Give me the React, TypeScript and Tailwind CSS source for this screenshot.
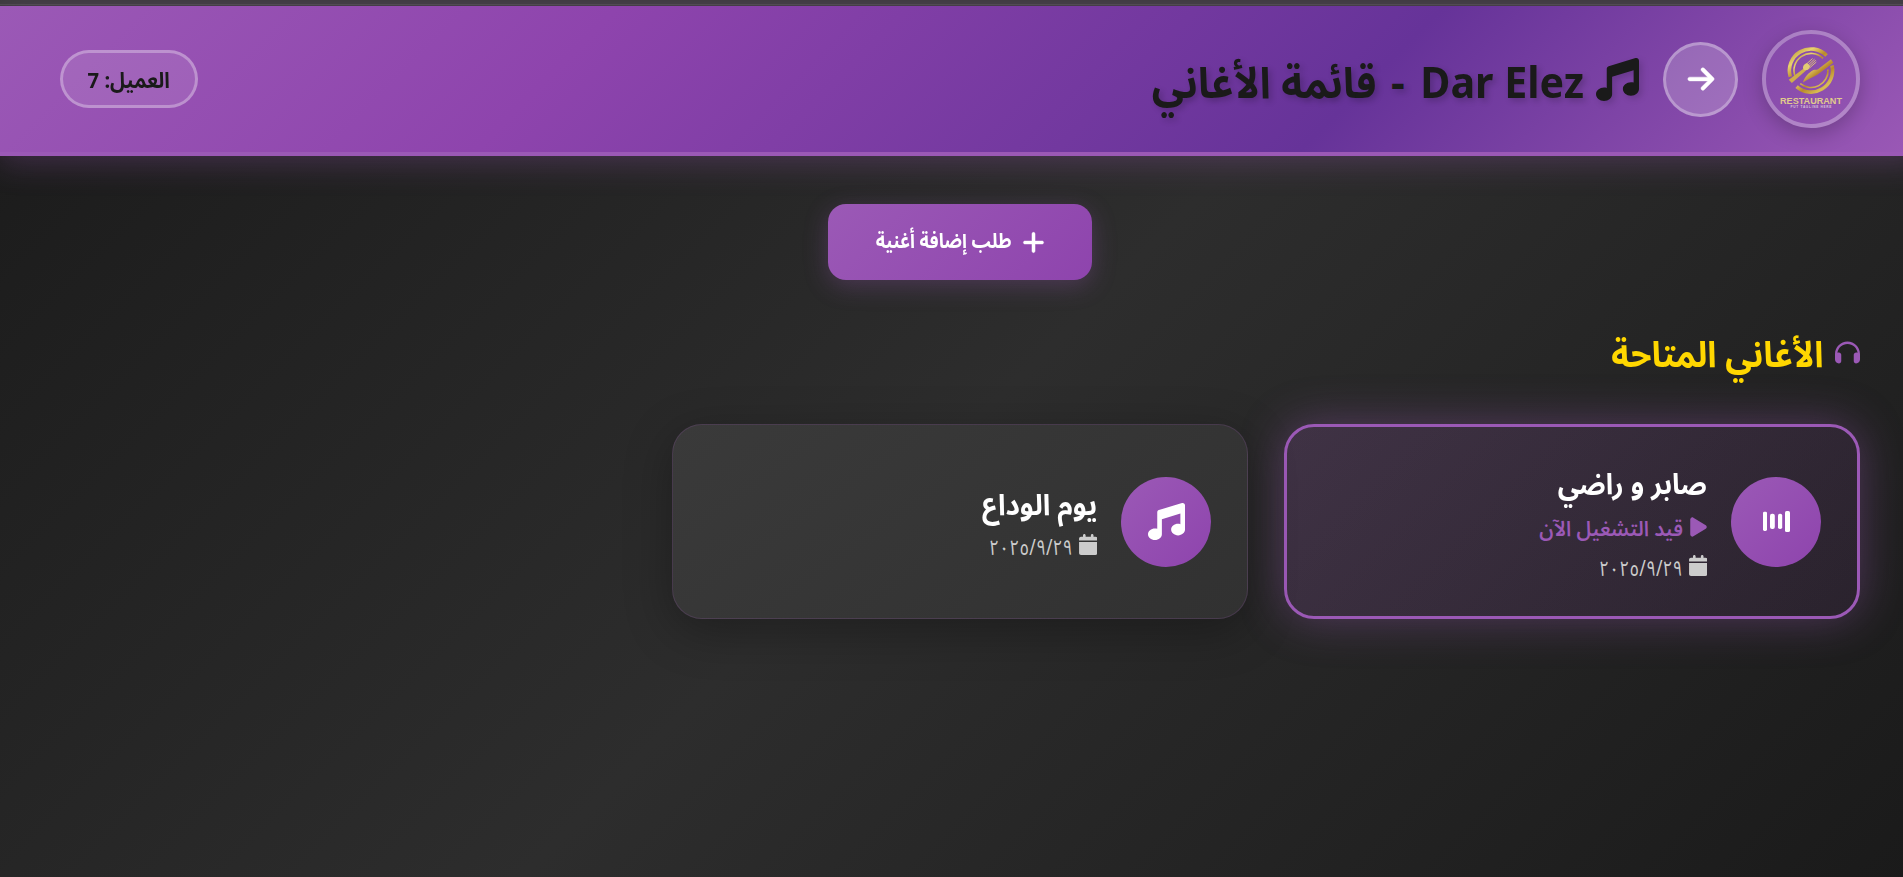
import type { ReactNode } from "react";
import {
  FaArrowRight,
  FaCalendar,
  FaHeadphones,
  FaMusic,
  FaPlay,
  FaPlus,
} from "react-icons/fa6";

function RestaurantLogo() {
  return (
    <div className="flex size-[98px] shrink-0 items-center justify-center rounded-full border-4 border-white/30 shadow-[0_6px_20px_rgba(0,0,0,0.22)]">
      <svg viewBox="0 0 66 64" className="h-[64px] w-[66px] overflow-visible" fill="none">
        <defs>
          <linearGradient id="gold" x1="0" y1="0" x2="1" y2="1">
            <stop offset="0" stopColor="#b08a2c" />
            <stop offset="0.3" stopColor="#e9d36f" />
            <stop offset="0.55" stopColor="#b98a2a" />
            <stop offset="0.8" stopColor="#d9bd55" />
            <stop offset="1" stopColor="#a97a24" />
          </linearGradient>
        </defs>
        <path d="M12.300 29.700A21.600 21.600 0 0 1 48.500 8.500" stroke="url(#gold)" strokeWidth="3.600" />
        <path d="M54 18.500A21.600 21.600 0 0 1 18.600 39.600" stroke="url(#gold)" strokeWidth="3.600" />
        <path d="M17.300 30A17 17 0 0 1 45 11.400" stroke="url(#gold)" strokeWidth="1.600" />
        <path d="M50 22.500A17 17 0 0 1 22.300 36.700" stroke="url(#gold)" strokeWidth="1.600" />
        <path d="M10.800 32.800 26 21.200l2 2.300L13.800 36Z" fill="#cfae4a" />
        <path d="M25.500 22.500c-1.500-3 .5-5.500 3.500-6.500l3 3c0 3-3.500 5.500-6.500 3.500Z" fill="#e3cb72" />
        <path d="m28.500 17 6-5.500M30 18.200l6.500-6M31 19.500l6.800-6.300M31.500 21l6.800-6" stroke="#e3cb72" strokeWidth="0.900" />
        <path d="M25 35.500c1-4.500 5.500-10 10.500-12.500 1.500-.7 3 .2 4.500-.8L53 12.300l2.300 3.400L41.500 26c-4 3.500-9 4.500-16.500 9.500Z" fill="url(#gold)" />
        <text x="33" y="57.200" textAnchor="middle" textLength="62" lengthAdjust="spacingAndGlyphs" fontSize="8.600" fontWeight="700" fontFamily="Liberation Sans, sans-serif" fill="#e0cb8c">RESTAURANT</text>
        <text x="33" y="61.300" textAnchor="middle" textLength="41" fontSize="3.200" fontWeight="700" fontFamily="Liberation Sans, sans-serif" fill="#d8c3d8">PUT TAGLINE HERE</text>
      </svg>
    </div>
  );
}

function EqualizerIcon() {
  return (
    <svg viewBox="0 0 27 21" className="h-[21px] w-[27px]" fill="#fff">
      <rect x="0" y="0.700" width="4" height="19.300" rx="1.400" />
      <rect x="7" y="2.700" width="4.800" height="15.300" rx="2" />
      <rect x="15" y="2.700" width="4.200" height="15.300" rx="1.800" />
      <rect x="22" y="0" width="5" height="21" rx="1.600" />
    </svg>
  );
}

function SongCard({ title, playing, icon }: { title: string; playing?: boolean; icon: ReactNode }) {
  return (
    <article
      className={
        playing
          ? "flex h-[195px] items-center gap-6 rounded-[30px] border-3 border-[#9b59b6] bg-[linear-gradient(135deg,rgba(155,89,182,0.2),rgba(142,68,173,0.1))] px-9 shadow-[0_0_45px_rgba(155,89,182,0.4)]"
          : "flex h-[195px] items-center gap-6 rounded-[30px] border border-[#9b59b6]/20 bg-[linear-gradient(145deg,#3a3a3a,#313131)] px-9 shadow-[0_12px_48px_rgba(0,0,0,0.3)]"
      }
    >
      <div className="flex size-[90px] shrink-0 items-center justify-center rounded-full bg-[linear-gradient(135deg,#9b59b6,#8e44ad)] text-white">
        {icon}
      </div>
      <div className="flex flex-col">
        <h3
          className={
            playing
              ? "h-[42px] origin-right scale-x-[0.935] text-[29px] leading-[42px] font-bold whitespace-nowrap text-white"
              : "h-[42px] origin-right scale-x-[0.958] text-[29px] leading-[42px] font-bold whitespace-nowrap text-white"
          }
        >
          {title}
        </h3>
        {playing && (
          <p className="flex h-[42px] translate-y-[2px] items-center gap-[7px] text-[21px] leading-[42px] font-semibold text-[#9b59b6]">
            <FaPlay className="h-[22px] w-[17px]" />
            <span className="origin-right translate-y-[1px] scale-x-[0.958]">قيد التشغيل الآن</span>
          </p>
        )}
        <p className="flex h-[36px] translate-y-[2px] items-center gap-[6px] text-[21px] leading-[36px] text-[#cccccc]">
          <FaCalendar className="h-[21px] w-[18.500px]" />
          <span className="origin-right translate-y-[2px] scale-x-[0.840]">٢٠٢٥/٩/٢٩</span>
        </p>
      </div>
    </article>
  );
}

export default function App() {
  return (
    <div className="flex h-[877px] w-full overflow-hidden">
      <div
        dir="rtl"
        className="flex w-[1920px] shrink-0 flex-col bg-[linear-gradient(135deg,#1a1a1a_0%,#2d2d2d_50%,#1a1a1a_100%)] font-['Noto_Sans','Noto_Sans_Arabic','DejaVu_Sans',sans-serif]"
      >
        <div className="h-[6px] shrink-0 border-b border-[#3b3b3b] bg-[#3b3b3b]">
          <div className="h-[5px] border-b border-[#4a4a4a]" />
        </div>
        <header className="flex h-[150px] shrink-0 items-center justify-between border-b-4 border-[#9b59b6] bg-[linear-gradient(135deg,#9b59b6_0%,#8e44ad_30%,#663399_70%,#9b59b6_100%)] px-[60px] shadow-[0_6px_30px_rgba(155,89,182,0.3)]">
          <div className="flex items-center gap-6">
            <RestaurantLogo />
            <button className="flex size-[75px] items-center justify-center rounded-full border-3 border-white/30 bg-white/20 text-white">
              <FaArrowRight className="size-[30px] stroke-current stroke-[8]" />
            </button>
            <h1 className="flex items-center gap-3 text-[43px] leading-[60px] font-bold whitespace-nowrap text-[#1a1a1a] [text-shadow:3px_3px_6px_rgba(0,0,0,0.2)]">
              <FaMusic className="size-[43px] drop-shadow-[3px_3px_3px_rgba(0,0,0,0.15)]" />
              <span className="pt-[5px]">
                <span className="inline-block origin-right scale-x-[0.957]">Dar Elez</span>{" "}
                <span className="inline-block translate-x-[3px]">-</span>{" "}
                <span className="inline-block origin-right scale-x-[0.954]">قائمة الأغاني</span>
              </span>
            </h1>
          </div>
          <div className="flex h-[58px] w-[138px] items-center justify-center rounded-[30px] border-3 border-white/30 bg-white/10 text-[22px] font-bold whitespace-nowrap text-[#1a1a1a]">
            <span className="scale-x-[0.920]">العميل: 7</span>
          </div>
        </header>
        <main className="flex flex-col px-[60px] pt-12">
          <button className="flex h-[76px] w-[264px] items-center justify-center gap-[9px] self-center rounded-[18px] bg-[linear-gradient(135deg,#9b59b6,#8e44ad)] text-[21px] font-bold whitespace-nowrap text-white shadow-[0_6px_24px_rgba(155,89,182,0.3)]">
            <FaPlus className="size-[25px] stroke-current stroke-[8]" />
            <span className="w-[137px] pb-[2px]">
              <span className="inline-block origin-right scale-x-[0.856]">طلب إضافة أغنية</span>
            </span>
          </button>
          <h2 className="mt-[45px] flex h-[60px] items-center gap-3 text-[36px] leading-[60px] font-bold text-[#ffd700]">
            <FaHeadphones className="mb-[5px] size-[25px] text-[#9b59b6]" />
            <span className="origin-right scale-x-[0.941] pb-[3px]">الأغاني المتاحة</span>
          </h2>
          <div className="mt-[39px] grid grid-cols-3 gap-9">
            <SongCard title="صابر و راضي" playing icon={<EqualizerIcon />} />
            <SongCard title="يوم الوداع" icon={<FaMusic className="size-[37px]" />} />
          </div>
        </main>
      </div>
    </div>
  );
}
